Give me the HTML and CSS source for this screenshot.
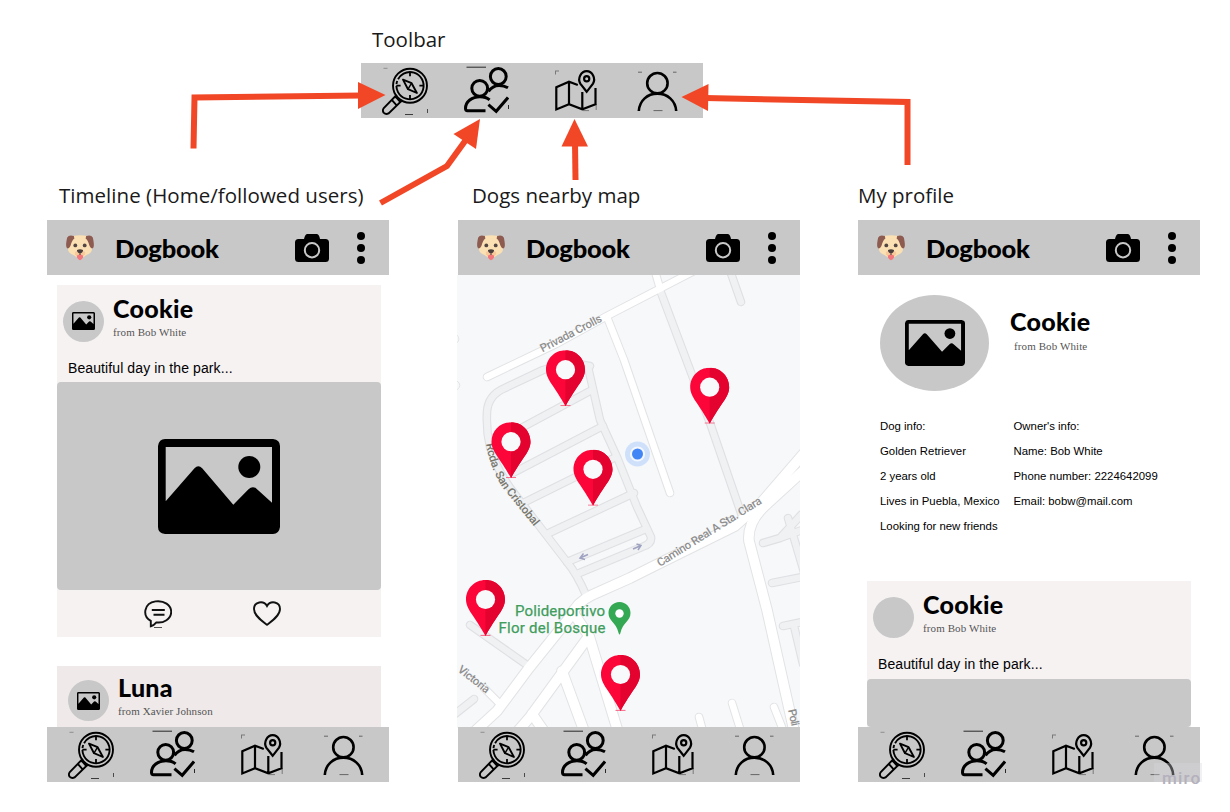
FILE: index.html
```html
<!DOCTYPE html>
<html lang="en">
<head>
<meta charset="utf-8">
<title>Dogbook wireframes</title>
<link rel="stylesheet" href="styles.css">
</head>
<body>
<svg class="sprite" aria-hidden="true">
  <defs>
    <symbol id="explore" viewBox="0 0 46 48">
      <g fill="none" stroke="#000" stroke-width="1.9">
        <circle cx="28" cy="18.7" r="17"/>
        <circle cx="28" cy="18.7" r="13.6" stroke-dasharray="70 2 3 2 8.4"  transform="rotate(-118 28 18.7)"/>
        <path d="M28 5v4.3M28 28v4.3M14.3 18.7h4.3M37.4 18.7h4.3" stroke-width="1.8"/>
        <path d="M21 12.6l8.6 3.6 5.3 9.8-8.9-3.8z" stroke-linejoin="round"/>
        <path d="M29.6 16.2l-3.6 6" stroke-width="1.4"/>
        <path d="M15.3 31.5L18.4 35 6.6 46.4Q3.8 47.8 1.6 45.6 0.1 43.4 1.8 41L13 29.6zM10 33.2l4.2 4.6M13 29.6l2-1.6M18.4 35l2-1.8"/>
      </g>
      <path d="M1.5 1.3h4" stroke="#555" stroke-width=".5"/>
      <path d="M23 47.5h8M45.6 42v4" stroke="#000" stroke-width=".7"/>
    </symbol>
    <symbol id="friends" viewBox="0 0 46 48">
      <g fill="none" stroke="#000" stroke-width="3">
        <circle cx="35.3" cy="10.5" r="7.9"/>
        <circle cx="16.7" cy="22.3" r="7.9"/>
        <path d="M25.5 25.4Q29.5 19.5 36 19.4 41 19.4 45 21.8"/>
        <path d="M26.6 33.8Q23 30.8 17 30.8C9 30.8 2.5 35.5 2.5 42.5Q2.5 44.7 4.5 44.7H22.5"/>
        <path d="M25.4 38.6l7.8 6.7L45 31.5"/>
      </g>
      <path d="M3.5 1.2H23M45.5 39v4" stroke="#000" stroke-width=".8"/>
    </symbol>
    <symbol id="map" viewBox="0 0 42 42">
      <g fill="none" stroke="#000" stroke-width="2.2">
        <path d="M22.8 15L14 11.8 1.3 17.3V39.4L14 34.3l13.3 5.1 13.2-5.1V18M14 11.8v22.5M27.3 22v17.4"/>
        <path d="M31.7 21.8L25.3 13.6C22.3 8.5 26 1.2 31.7 1.2S41 8.5 38 13.6z"/>
        <circle cx="31.7" cy="8.8" r="2.6"/>
      </g>
      <path d="M.5.5v4M28 40.6h6M41.2 34v6M1 1h3" stroke="#000" stroke-width=".4"/>
    </symbol>
    <symbol id="person" viewBox="0 0 42 41">
      <g fill="none" stroke="#000" stroke-width="2.6">
        <circle cx="20.4" cy="12.2" r="10.2"/>
        <path d="M1.8 40C2.5 29.5 10.5 22.6 20.4 22.6S38.5 29.5 39.2 40"/>
      </g>
      <path d="M1 1.2h4M36 1.2h3.5M16.5 39.6h9" stroke="#000" stroke-width=".5"/>
    </symbol>
    <symbol id="picture" viewBox="0 0 122 95" preserveAspectRatio="none">
      <path fill-rule="evenodd" d="M7 0H115Q122 1 122 7V88Q121 95 115 95H7Q0 94 0 88V7Q1 0 7 0zM7.7 8V62.3L36.5 29.3Q40.3 25.3 44.2 29.3L75.3 65.7 90.5 50.3Q94.7 46.3 98.8 50L114 63.7V8z"/>
      <circle cx="91.3" cy="28" r="11"/>
    </symbol>
    <symbol id="camera" viewBox="0 0 34 28">
      <path d="M3.5 5H9Q10 .5 12 0H22Q24.2.6 25 5H30.5Q34 5 34 8.5V24.5Q34 28 30.5 28H3.5Q0 28 0 24.5V8.5Q0 5 3.5 5z"/>
      <circle cx="17" cy="16.2" r="7.2" fill="none" stroke="#c8c8c8" stroke-width="2"/>
    </symbol>
    <symbol id="dots" viewBox="0 0 10 32">
      <circle cx="5" cy="4" r="4"/><circle cx="5" cy="16" r="4"/><circle cx="5" cy="28" r="4"/>
    </symbol>
    <symbol id="dog" viewBox="0 0 28 26">
      <path fill="#fae0b2" d="M6 1.2Q14-.6 22 1.2C25 7 27 12 25.6 16 24 19.5 20 19.6 18.5 21.5Q14 25 9.5 21.5C8 19.6 4 19.5 2.4 16 1 12 3 7 6 1.2z"/>
      <path fill="#8d5b50" d="M7.8 1Q3-.8 1.2 2.6C.4 6-.4 10.6.6 12.6 1.6 14.4 3.4 13 4.6 10.4 5.6 7.4 6.2 5 8.4 3.4zM20.2 1Q25-.8 26.8 2.6C27.6 6 28.4 10.6 27.4 12.6 26.4 14.4 24.6 13 23.4 10.4 22.4 7.4 21.8 5 19.6 3.4z"/>
      <path fill="#f4777b" d="M10.5 18.6h7l-.6 4.2Q14 27.6 11.1 22.8z"/>
      <path fill="#f8c99a" d="M9 17Q14 13 19 17 20 20.3 17 20.4L14 19.2 11 20.4Q8 20.3 9 17z"/>
      <circle cx="9.3" cy="10.4" r="1.9" fill="#514644"/><circle cx="18.7" cy="10.4" r="1.9" fill="#514644"/>
      <path fill="#4b3f3d" d="M11 15Q14 13.4 17 15 17.4 17.4 14 18.6 10.6 17.4 11 15zM13.5 18h1v2h-1z"/>
    </symbol>
    <symbol id="comment" viewBox="0 0 28 28">
      <path fill="none" stroke="#111" stroke-width="1.9" d="M6.8 26.3V20.8C-2 16-.2 3.2 11.5 1.4 20 .2 27.2 5 27.2 11.8 27.2 19 19.5 23.4 12.4 22.4 10.8 24.4 9 25.6 6.8 26.3zM7.8 10h13M9.5 14.8h11"/>
      <path d="M10 27.6h8" stroke="#111" stroke-width=".8"/>
    </symbol>
    <symbol id="heart" viewBox="0 0 28 26">
      <path fill="none" stroke="#111" stroke-width="1.9" d="M14 23.8C9 20 1 14.5 1 8 1 .6 10.5-1 14 5 17.5-1 27 .6 27 8 27 14.5 19 20 14 23.8z"/>
    </symbol>
    <symbol id="pin" viewBox="0 0 40 56">
      <path fill="#fc0538" d="M20 0C9 0 .5 8.6.5 19.5.5 29.5 9 35.5 20 56 31 35.5 39.5 29.5 39.5 19.5 39.5 8.6 31 0 20 0z"/>
      <path fill="#e4032e" d="M20 0C31 0 39.5 8.6 39.5 19.5 39.5 29.5 31 35.5 20 56z"/>
      <path d="M15 55.4h10" stroke="#fc0538" stroke-width=".6"/>
      <circle cx="20" cy="19.5" r="9.6" fill="#f8f9fb"/>
    </symbol>
  </defs>
</svg>

<main class="board">
  <section class="legend">
    <h2 class="label">Toolbar</h2>
    <nav class="toolbar">
      <svg class="i-explore"><use href="#explore"/></svg>
      <svg class="i-friends"><use href="#friends"/></svg>
      <svg class="i-map"><use href="#map"/></svg>
      <svg class="i-person"><use href="#person"/></svg>
    </nav>
  </section>

  <div class="screens">
    <section class="screen timeline">
      <h2 class="label">Timeline (Home/followed users)</h2>
      <header class="appbar">
        <svg class="i-dog"><use href="#dog"/></svg><span class="brand">Dogbook</span>
        <svg class="i-camera"><use href="#camera"/></svg><svg class="i-dots"><use href="#dots"/></svg>
      </header>
      <div class="content">
        <article class="card">
          <div class="author">
            <span class="avatar"><svg><use href="#picture"/></svg></span>
            <div><h3 class="name">Cookie</h3><p class="owner">from Bob White</p></div>
          </div>
          <p class="caption">Beautiful day in the park...</p>
          <div class="photo"><svg><use href="#picture"/></svg></div>
          <div class="actions">
            <svg class="i-comment"><use href="#comment"/></svg>
            <svg class="i-heart"><use href="#heart"/></svg>
          </div>
        </article>
        <article class="card next">
          <div class="author">
            <span class="avatar"><svg><use href="#picture"/></svg></span>
            <div><h3 class="name">Luna</h3><p class="owner">from Xavier Johnson</p></div>
          </div>
        </article>
      </div>
      <nav class="toolbar">
        <svg class="i-explore"><use href="#explore"/></svg>
        <svg class="i-friends"><use href="#friends"/></svg>
        <svg class="i-map"><use href="#map"/></svg>
        <svg class="i-person"><use href="#person"/></svg>
      </nav>
    </section>

    <section class="screen nearby">
      <h2 class="label">Dogs nearby map</h2>
      <header class="appbar">
        <svg class="i-dog"><use href="#dog"/></svg><span class="brand">Dogbook</span>
        <svg class="i-camera"><use href="#camera"/></svg><svg class="i-dots"><use href="#dots"/></svg>
      </header>
      <svg class="content streetmap" viewBox="457 275 343 453">
        <defs>
          <g id="minor">
            <path d="M588 367L600 420 617 457 637 507 651 537Q652 544 642 547L577 574"/>
            <path d="M590 366Q570 361 543 370L505 388Q488 395 487 412 486 430 490 447 497 472 517 497L537 523 567 562Q577 574 586 595"/>
            <path d="M510 434L590 391M513 473L603 426M523 503L616 457M549 533L634 493M567 562L646 529"/>
            <path d="M660 290L710 423 742 516M727 262L741 302M470 625L527 665M474 699L455 714"/>
            <path d="M763 543L780 538 802 514M780 538L802 530M788 518L804 572M772 583L802 577M783 626L802 622M794 626L803 664"/>
          </g>
          <g id="major">
            <path d="M487 377L556 344 607 316 694 271"/>
            <path d="M607 317L624 360 670 493M654 268L659 285"/>
            <path d="M699 717L704 735M732 703L742 735M774 707L785 735"/>
            <path d="M484 688L502 706"/>
          </g>
          <g id="avenue">
            <path d="M472 734L497 711 529 668 570 617Q577 602 592 595L630 578 656 565 735 526 761 503 805 452"/>
            <path d="M804 470L768 503Q747 521 749 541L767 610 795 735"/>
            <path d="M574 614L589 636 619 735M512 738L530 717 589 636M532 714L550 740M562 671L587 739"/>
          </g>
          <path id="cristobal" d="M486 444Q490 469 503 488L540 534"/>
        </defs>
        <rect x="457" y="275" width="343" height="453" fill="#f7f8fa"/>
        <g fill="none" stroke-linecap="round" stroke-linejoin="round">
          <use href="#minor" stroke="#dfe0e3" stroke-width="8.6"/>
          <use href="#major" stroke="#e2e3e5" stroke-width="8.6"/>
          <use href="#avenue" stroke="#e2e3e5" stroke-width="11.6"/>
          <use href="#minor" stroke="#f0f1f3" stroke-width="6.4"/>
          <use href="#major" stroke="#fff" stroke-width="6.6"/>
          <use href="#avenue" stroke="#fff" stroke-width="9.6"/>
          <path d="M457 335q4 4 0 8M457 381q6 4 0 9" stroke="#e4e5e6"/>
        </g>
        <g class="streets">
          <text transform="translate(542.5 352.5) rotate(-27.5)" textLength="68">Privada Crolls</text>
          <text transform="translate(660 567) rotate(-32)" textLength="121">Camino Real A Sta. Clara</text>
          <text class="dark" textLength="97"><textPath href="#cristobal">Rcda. San Cristobal</textPath></text>
          <text transform="translate(457 671) rotate(38)" textLength="37">Victoria</text>
          <text transform="translate(788 710) rotate(78)" textLength="17">Poli</text>
        </g>
        <g fill="none" stroke="#9fa2c0" stroke-width="1.5">
          <path d="M588 554.5L580 558M583.5 553.5L580 558l5 1.5M633 549l8-3.5M636.5 544l4.5 1.5-3 4.5"/>
        </g>
        <g class="place">
          <text x="515" y="616" textLength="90">Polideportivo</text>
          <text x="498.5" y="633" textLength="107">Flor del Bosque</text>
        </g>
        <path fill="#34a853" d="M619.5 602C613 602 608.5 607 608.5 613 608.5 621 616 622 618.6 633Q619.5 636 620.4 633C623 622 630.5 621 630.5 613 630.5 607 626 602 619.5 602z"/>
        <circle cx="619.5" cy="613.5" r="4.2" fill="#fff"/>
        <circle cx="637.5" cy="454" r="12.5" fill="#cfe0fa"/>
        <circle cx="637.5" cy="454" r="7.6" fill="#f4f8fe"/>
        <circle cx="637.5" cy="454" r="5.5" fill="#4285f4"/>
        <use href="#pin" x="545.5" y="350.2" width="40" height="56"/>
        <use href="#pin" x="491" y="422.2" width="40" height="56"/>
        <use href="#pin" x="573" y="449.8" width="40" height="56"/>
        <use href="#pin" x="689.7" y="367.7" width="40" height="56"/>
        <use href="#pin" x="465.5" y="580" width="40" height="56"/>
        <use href="#pin" x="600.5" y="655" width="40" height="56"/>
      </svg>
      <nav class="toolbar">
        <svg class="i-explore"><use href="#explore"/></svg>
        <svg class="i-friends"><use href="#friends"/></svg>
        <svg class="i-map"><use href="#map"/></svg>
        <svg class="i-person"><use href="#person"/></svg>
      </nav>
    </section>

    <section class="screen profile">
      <h2 class="label">My profile</h2>
      <header class="appbar">
        <svg class="i-dog"><use href="#dog"/></svg><span class="brand">Dogbook</span>
        <svg class="i-camera"><use href="#camera"/></svg><svg class="i-dots"><use href="#dots"/></svg>
      </header>
      <div class="content">
        <div class="bio">
          <span class="portrait"><svg><use href="#picture"/></svg></span>
          <div class="bio-text"><h3 class="name">Cookie</h3><p class="owner">from Bob White</p></div>
        </div>
        <div class="info">
          <ul>
            <li>Dog info:</li><li>Golden Retriever</li><li>2 years old</li><li>Lives in Puebla, Mexico</li><li>Looking for new friends</li>
          </ul>
          <ul>
            <li>Owner's info:</li><li>Name: Bob White</li><li>Phone number: 2224642099</li><li>Email: bobw@mail.com</li>
          </ul>
        </div>
        <article class="card">
          <div class="author">
            <span class="avatar"></span>
            <div><h3 class="name">Cookie</h3><p class="owner">from Bob White</p></div>
          </div>
          <p class="caption">Beautiful day in the park...</p>
          <div class="photo"></div>
        </article>
      </div>
      <nav class="toolbar">
        <svg class="i-explore"><use href="#explore"/></svg>
        <svg class="i-friends"><use href="#friends"/></svg>
        <svg class="i-map"><use href="#map"/></svg>
        <svg class="i-person"><use href="#person"/></svg>
      </nav>
    </section>
  </div>

  <svg class="connectors" viewBox="0 0 1230 812">
    <g fill="none" stroke="#f24726" stroke-width="6">
      <path d="M193.5 148.5L194.5 97.5 362 95.5"/>
      <path d="M380.5 203L447 166 468 137"/>
      <path d="M575.5 180L575 142"/>
      <path d="M907.5 165V102L705 98"/>
    </g>
    <g fill="#f24726">
      <path d="M385.5 95L358 82V109z"/>
      <path d="M480 119L476 149 453.5 134z"/>
      <path d="M574.5 119L588 146.5H561.5z"/>
      <path d="M681.5 97L708.5 84 708 111z"/>
    </g>
  </svg>
  <span class="watermark">miro</span>
</main>
</body>
</html>
```
FILE: styles.css
```css
* { box-sizing: border-box; margin: 0; padding: 0; }
body { background: #fff; color: #000; font-family: "Liberation Sans", Arial, sans-serif; }
svg { display: block; flex: none; }
ul { list-style: none; }
.sprite { width: 0; height: 0; overflow: hidden; position: absolute; }

.board { position: relative; width: 1230px; height: 812px; overflow: hidden; background: #fff; }
.label { font: 400 20.5px/28px "Open Sans", "Noto Sans", sans-serif; color: #1a1a1a; white-space: nowrap; }

.legend { width: 342px; height: 118px; margin-left: 361px; padding-top: 25px; }
.legend .label { padding-left: 11px; height: 38px; }

.toolbar { display: flex; align-items: flex-start; width: 342px; height: 55px; background: #c8c8c8; }
.i-explore { width: 46px; height: 48px; margin: 4px 0 0 21px; }
.i-friends { width: 46px; height: 48px; margin: 3px 0 0 35px; }
.i-map { width: 42px; height: 42px; margin: 7px 0 0 46px; }
.i-person { width: 42px; height: 41px; margin: 8px 0 0 40px; }

.screens { display: flex; padding: 63px 0 0 47px; }
.screen { width: 342px; display: flex; flex-direction: column; }
.nearby { margin-left: 69px; }
.profile { margin-left: 58px; }
.screen .label { height: 39px; padding-left: 12px; }
.nearby .label { padding-left: 14px; }
.profile .label { padding-left: 0; }
.timeline .label { letter-spacing: .04px; }

.appbar { display: flex; align-items: center; height: 55px; background: #c8c8c8; padding: 0 23px 0 19px; }
.i-dog { width: 28px; height: 26px; }
.brand { font: 900 25.5px/32px Lato, sans-serif; letter-spacing: -.25px; margin: 0 auto 0 21px; }
.i-camera { width: 34px; height: 28px; margin-right: 27px; }
.i-dots { width: 10px; height: 32px; }
.content { height: 452px; }
.streetmap { width: 343px; height: 453px; margin: 0 0 -1px -1px; }
.streets { font: 500 11.5px Roboto, sans-serif; fill: #8f8f8f; }
.streets .dark { fill: #77776c; }
.place { font: 400 15px Roboto, sans-serif; fill: #3f9d5d; stroke: #3f9d5d; stroke-width: .25px; }

.timeline .content, .profile .content { padding: 9.5px 9px 0 10px; overflow: hidden; }
.card { background: #f6f2f2; width: 323.5px; }
.author { display: flex; height: 71px; padding: 8px 0 0 6px; gap: 9px; }
.avatar { width: 41px; height: 41px; margin-top: 8px; border-radius: 50%; background: #c8c8c8; display: grid; place-items: center; }
.avatar svg { width: 23px; height: 18px; }
.name { font: 900 25px/30px Lato, sans-serif; letter-spacing: .3px; }
.owner { font: 11px/14px "Liberation Serif", "Times New Roman", serif; letter-spacing: .1px; color: #555; margin-top: 2px; }
.caption { font-size: 14px; line-height: 16px; letter-spacing: .1px; height: 26.5px; padding: 4px 0 0 11px; }
.photo { height: 208px; border-radius: 4px; background: #c8c8c8; display: grid; place-items: center; }
.photo svg { width: 122px; height: 95px; }
.actions { display: flex; height: 46.5px; padding: 9.5px 0 0 87px; }
.i-comment { width: 28px; height: 28px; }
.i-heart { width: 28px; height: 26px; margin: 1px 0 0 81px; }
.next { margin-top: 29.5px; background: #efe9e9; }
.next .author { padding: 6px 0 0 11px; }

.bio { display: flex; padding: 10.5px 0 0 12px; }
.portrait { width: 109px; height: 96px; border-radius: 50%; background: #c8c8c8; display: grid; place-items: center; }
.portrait svg { width: 60px; height: 46px; }
.bio-text { padding: 11px 0 0 21px; }
.bio-text .owner { padding-left: 4px; margin-top: 3px; }
.info { display: grid; grid-template-columns: 133.5px auto; padding: 23px 0 0 12px; height: 190px; font-size: 11.38px; line-height: 25px; white-space: nowrap; }
.profile .card { margin-left: -1px; }
.profile .photo { height: 48px; }

.connectors { position: absolute; inset: 0; width: 1230px; height: 812px; pointer-events: none; }
.watermark { position: absolute; left: 1154px; top: 763px; width: 48px; height: 28px; padding: 4px 0 0 8px; background: linear-gradient(rgba(215,213,220,.35) 0 19px, transparent 19px); color: #b4b1bd; font: 500 17px/22px Roboto, sans-serif; letter-spacing: 1.2px; }
```
